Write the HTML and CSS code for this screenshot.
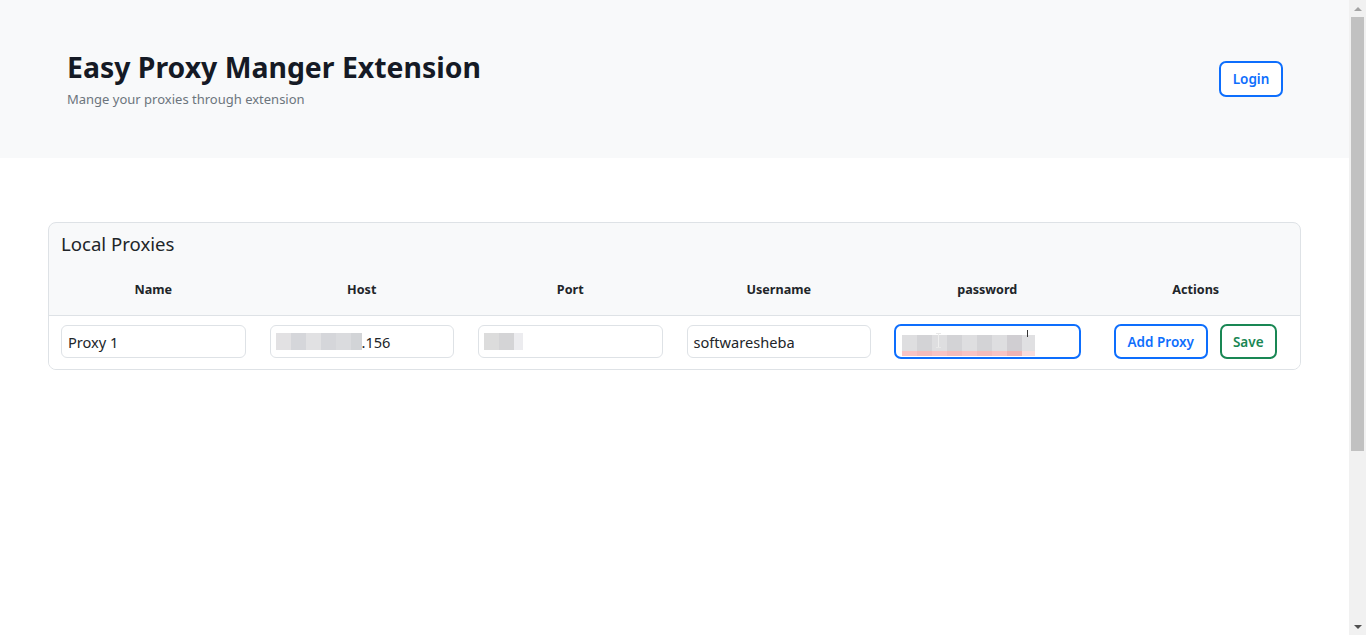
FILE: index.html
```html
<!DOCTYPE html>
<html lang="en">
<head>
<meta charset="utf-8">
<title>Easy Proxy Manger Extension</title>
<link rel="stylesheet" href="styles.css">
</head>
<body>
<div class="page">
  <header class="hero">
    <div class="hero-text">
      <h1 class="title">Easy Proxy Manger Extension</h1>
      <p class="subtitle">Mange your proxies through extension</p>
    </div>
    <button class="btn btn-blue btn-login">Login</button>
  </header>

  <main class="main">
    <section class="card">
      <h2 class="card-title">Local Proxies</h2>
      <table class="proxy-table">
        <thead>
          <tr>
            <th>Name</th>
            <th>Host</th>
            <th>Port</th>
            <th>Username</th>
            <th>password</th>
            <th>Actions</th>
          </tr>
        </thead>
        <tbody>
          <tr>
            <td><div class="field"><span class="val">Proxy 1</span></div></td>
            <td><div class="field"><span class="blur b-host"><i></i><i></i><i></i><i></i><i></i><i></i></span><span class="val">.156</span></div></td>
            <td><div class="field"><span class="blur b-port"><i></i><i></i><i></i></span></div></td>
            <td><div class="field"><span class="val">softwaresheba</span></div></td>
            <td><div class="field focus"><span class="blur b-pass"><i></i><i></i><i></i><i></i><i></i><i></i><i></i><i></i><i></i></span><span class="caret"></span><span class="ibeam"></span></div></td>
            <td class="actions">
              <button class="btn btn-blue btn-add">Add Proxy</button>
              <button class="btn btn-green btn-save">Save</button>
            </td>
          </tr>
        </tbody>
      </table>
    </section>
  </main>
</div>
<div class="scrollbar">
  <div class="sb-arrow sb-up"></div>
  <div class="sb-track"><div class="sb-thumb"></div></div>
  <div class="sb-arrow sb-down"></div>
</div>
</body>
</html>
```
FILE: styles.css
```css
* { box-sizing: border-box; }
html, body { margin: 0; padding: 0; }
body {
  font-family: "Noto Sans", "Open Sans", sans-serif;
  color: #212529;
  background: #fff;
  display: flex;
  height: 100vh;
  overflow: hidden;
}
.page { flex: 1; min-width: 0; }

.hero {
  height: 158px;
  background: #f8f9fa;
  display: flex;
  align-items: center;
  justify-content: space-between;
  padding: 0 66px 0 67px;
}
.title {
  margin: 0;
  font-size: 28.4px;
  font-weight: 700;
  line-height: 1.2;
  color: #151a25;
}
.subtitle {
  margin: 6px 0 0;
  font-size: 13px;
  color: #6c757d;
}

.btn {
  font-family: inherit;
  font-size: 13.5px;
  font-weight: 600;
  background: #fff;
  border: 2px solid;
  border-radius: 7px;
  height: 35px;
  padding: 0;
  cursor: pointer;
}
.btn-blue { color: #0d6efd; border-color: #0d6efd; }
.btn-green { color: #198754; border-color: #198754; }
.btn-login { width: 64px; height: 36px; }
.btn-add { width: 94px; }
.btn-save { width: 57px; }

.main { padding: 64px 48px 0; }
.card {
  border: 1px solid #dee2e6;
  border-radius: 8px;
  background: #f8f9fa;
  overflow: hidden;
}
.card-title {
  margin: 0;
  padding: 9px 12px 0;
  font-size: 18.6px;
  font-weight: 400;
  line-height: 24px;
  color: #212529;
}
.proxy-table {
  width: 100%;
  table-layout: fixed;
  border-collapse: collapse;
}
.proxy-table th {
  font-size: 12.6px;
  font-weight: 700;
  height: 59px;
  padding: 8px 0 0;
  text-align: center;
  vertical-align: middle;
  border-bottom: 1px solid #dee2e6;
}
.proxy-table td {
  background: #fff;
  padding: 9px 12px 10px;
  height: 53px;
  vertical-align: middle;
}
.field {
  height: 33px;
  border: 1px solid #dee2e6;
  border-radius: 6px;
  background: #fff;
  display: flex;
  align-items: center;
  padding: 0 6px;
  font-size: 14.6px;
  color: #212529;
  position: relative;
}
.b-host, .b-port { margin-left: -1px; }
.field.focus {
  border: 2px solid #0d6efd;
  height: 35px;
  margin: -1px -1px;
  border-radius: 7px;
}
.blur { display: flex; height: 17px; }
.blur i { display: block; width: 15px; height: 100%; }
.b-host i:nth-child(1) { background: #e2e1e3; }
.b-host i:nth-child(2) { background: #d5d6da; }
.b-host i:nth-child(3) { background: #e1e1e3; }
.b-host i:nth-child(4) { background: #d5d6da; }
.b-host i:nth-child(5) { background: #dadbde; }
.b-host i:nth-child(6) { background: #d2d4d7; width: 11px; }
.b-port i:nth-child(1) { background: #dcdcdc; }
.b-port i:nth-child(2) { background: #d4d4d6; }
.b-port i:nth-child(3) { background: #ececef; width: 9px; }
.b-pass { height: 21px; margin-top: 7px; }
.b-pass i { width: 15px; background: linear-gradient(#dedee0 0 16px, #f8c4c4 16px 100%); }
.b-pass i:nth-child(even) { background: linear-gradient(#d3d3d6 0 16px, #f3bcbc 16px 100%); }
.b-pass i:nth-child(8) { background: linear-gradient(#d0ced2 0 16px, #efb4b4 16px 100%); }
.b-pass i:nth-child(9) { width: 13px; background: linear-gradient(#e0e0e2 0 16px, #f8dcdc 16px 100%); }
.caret {
  position: absolute;
  left: 131px;
  top: 4px;
  width: 1px;
  height: 7px;
  background: #333;
}
.ibeam {
  position: absolute;
  left: 40px;
  top: 7px;
  width: 5px;
  height: 15px;
  border-top: 1px solid #e8e8e8;
  border-bottom: 1px solid #e8e8e8;
  background: linear-gradient(90deg, transparent 2px, #eeeeee 2px 3px, transparent 3px);
}
.actions {
  display: flex;
  gap: 12px;
  justify-content: center;
  align-items: center;
}
.proxy-table td.actions { height: 53px; padding: 8px 1px 9px 0; }

.scrollbar {
  width: 17px;
  height: 100vh;
  background: #f1f1f1;
  display: flex;
  flex-direction: column;
  flex-shrink: 0;
}
.sb-arrow { height: 17px; display: flex; align-items: center; justify-content: center; }
.sb-up::before {
  content: "";
  border-left: 4px solid transparent;
  border-right: 4px solid transparent;
  border-bottom: 4px solid #a3a3a3;
}
.sb-down::before {
  content: "";
  border-left: 4px solid transparent;
  border-right: 4px solid transparent;
  border-top: 4px solid #505050;
}
.sb-track { flex: 1; padding: 0 2px; }
.sb-thumb { height: 434px; background: #c1c1c1; }
```
